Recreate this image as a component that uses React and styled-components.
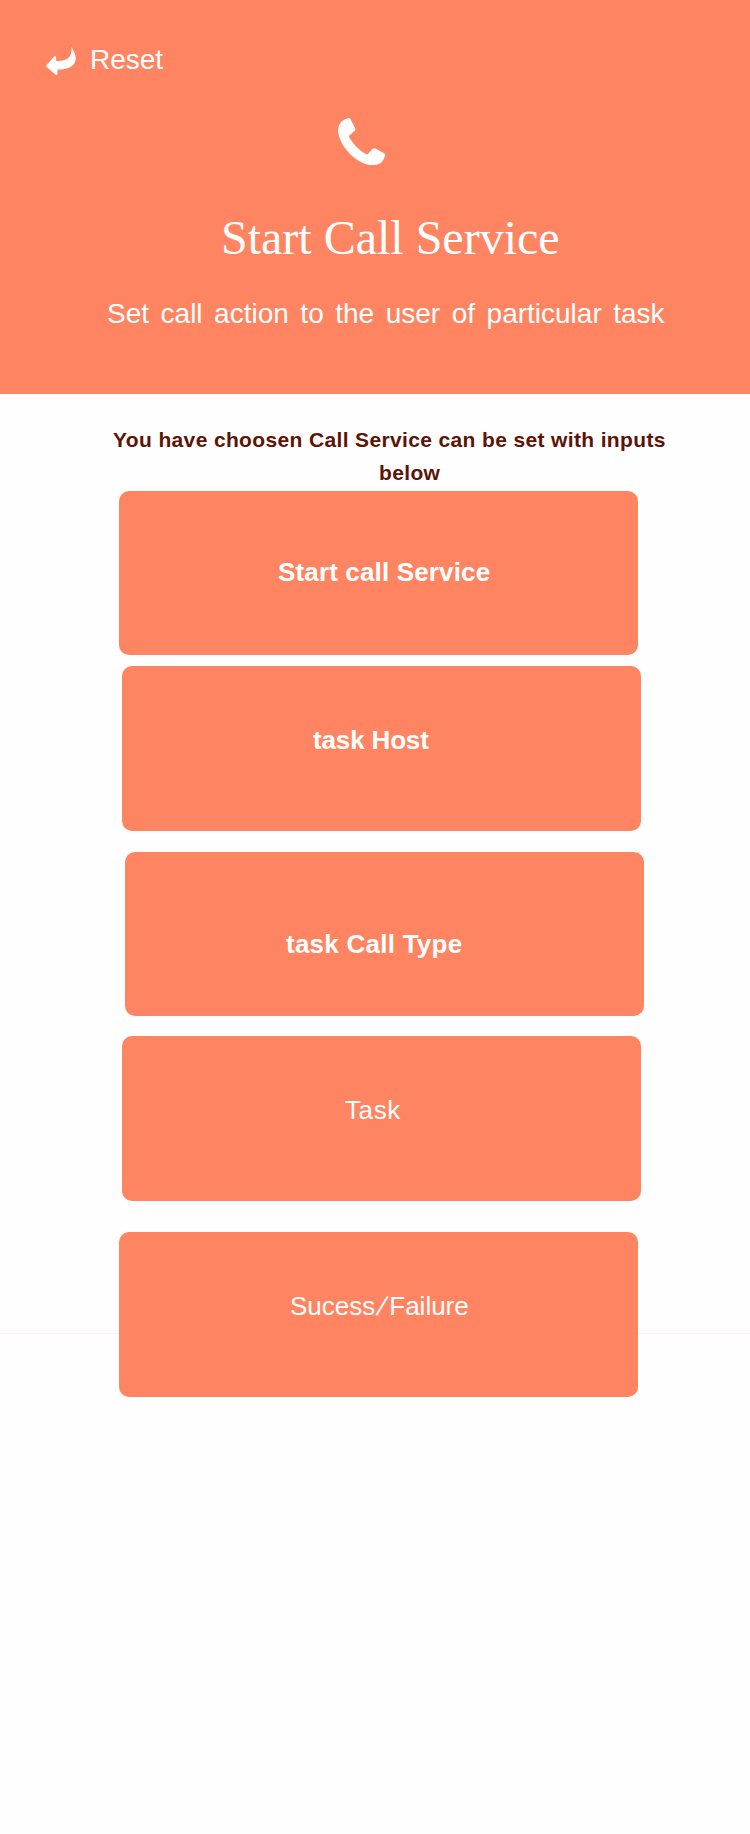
import React from 'react';
import styled, { createGlobalStyle } from 'styled-components';

const coral = '#ff8461';

const Global = createGlobalStyle`
  body { margin: 0; background: #fefefe; }
  * { box-sizing: border-box; }
`;

const Page = styled.main`
  width: 750px;
  height: 1834px;
  font-family: "Liberation Sans", Arial, sans-serif;
  color: #fff;
`;

const Header = styled.header`
  display: flex;
  flex-direction: column;
  height: 394px;
  padding-top: 43px;
  background: ${coral};
`;

const ResetButton = styled.button`
  display: flex;
  align-items: center;
  gap: 14px;
  align-self: flex-start;
  height: 34px;
  margin-left: 46px;
  padding: 0;
  border: 0;
  background: none;
  color: inherit;
  font: 28px/34px "Liberation Sans", Arial, sans-serif;
`;

const ArrowIcon = styled.svg`
  width: 30px;
  height: 30px;
  margin-top: 2px;
`;

const PhoneIcon = styled.svg`
  width: 48px;
  height: 48px;
  margin: 41px 0 0 338px;
`;

const Title = styled.h1`
  margin: 44px 0 0 221px;
  font: 400 48px/56px "Liberation Serif", "Times New Roman", serif;
  white-space: nowrap;
`;

const Subtitle = styled.p`
  margin: 31px 0 0 107px;
  font-size: 28px;
  line-height: 34px;
  word-spacing: 3.75px;
  white-space: nowrap;
`;

const Notice = styled.p`
  height: 97px;
  margin: 0;
  padding-top: 29px;
  color: #5c1405;
  font-size: 21px;
  font-weight: 700;
  line-height: 33px;
  letter-spacing: 0.36px;
`;

const NoticeLine = styled.span`
  display: block;
  padding-left: ${(p) => p.$indent}px;
  white-space: nowrap;
`;

const Steps = styled.section`
  position: relative;
  display: flex;
  flex-direction: column;
`;

const Divider = styled.hr`
  position: absolute;
  top: 842px;
  left: 0;
  width: 100%;
  height: 1px;
  margin: 0;
  border: 0;
  background: #fff1ee;
`;

const Card = styled.div`
  position: relative;
  width: 519px;
  height: ${(p) => p.$height}px;
  margin: ${(p) => p.$gap}px 0 0 ${(p) => p.$left}px;
  padding: ${(p) => p.$top}px 0 0 ${(p) => p.$indent}px;
  border-radius: 10px;
  background: ${coral};
  font-size: 26px;
  font-weight: ${(p) => (p.$bold ? 700 : 400)};
  line-height: 30px;
  letter-spacing: ${(p) => (p.$spacing || 0)}px;
  white-space: nowrap;
`;

const Slash = styled.span`
  display: inline-block;
  width: 14px;
  text-align: center;
  transform: skewX(-18deg);
`;

export default function App() {
  return (
    <Page>
      <Global />
      <Header>
        <ResetButton>
          <ArrowIcon viewBox="0 0 30 30" fill="currentColor">
            <path d="M25.3 1 C26.8 2.8 29.7 8 29.7 12.5 C29.7 19.5 23 23.6 11.6 23.6 L11.4 28 Q11 29.8 9.4 28.6 L.7 21 Q-.3 20 .6 19 L8.2 10.4 Q9.6 9.2 10 10.8 L10.3 15 C20 15.6 27 12 25.3 1Z" />
          </ArrowIcon>
          Reset
        </ResetButton>
        <PhoneIcon viewBox="0 0 48 48" fill="currentColor">
          <path d="M9.8 .2 Q11.6 -.4 12.6 1.2 L17.2 10.4 Q17.8 12 16.5 13.1 L11.6 17.2 Q10.5 18.2 11.4 19.7 Q18.5 31 27.8 36 Q29.3 36.8 30.4 35.4 L34.4 30.9 Q35.6 29.6 37.2 30.5 L46.2 35.2 Q47.6 36 47.1 37.8 Q44.5 46.7 36.4 47 C20 48.6 0 28 0 11.2 Q1 2.4 9.8 .2Z" />
        </PhoneIcon>
        <Title>Start Call Service</Title>
        <Subtitle>Set call action to the user of particular task</Subtitle>
      </Header>
      <Notice>
        <NoticeLine $indent={113}>You have choosen Call Service can be set with inputs</NoticeLine>
        <NoticeLine $indent={379}>below</NoticeLine>
      </Notice>
      <Steps>
        <Divider />
        <Card $bold $height={164} $gap={0} $left={119} $top={66} $indent={159} $spacing={0.15}>Start call Service</Card>
        <Card $bold $height={165} $gap={11} $left={122} $top={59} $indent={191} $spacing={-0.15}>task Host</Card>
        <Card $bold $height={164} $gap={21} $left={125} $top={77} $indent={161} $spacing={0.25}>task Call Type</Card>
        <Card $height={165} $gap={20} $left={122} $top={59} $indent={223} $spacing={0.6}>Task</Card>
        <Card $height={165} $gap={31} $left={119} $top={59} $indent={171}>
          Sucess<Slash>/</Slash>Failure
        </Card>
      </Steps>
    </Page>
  );
}
